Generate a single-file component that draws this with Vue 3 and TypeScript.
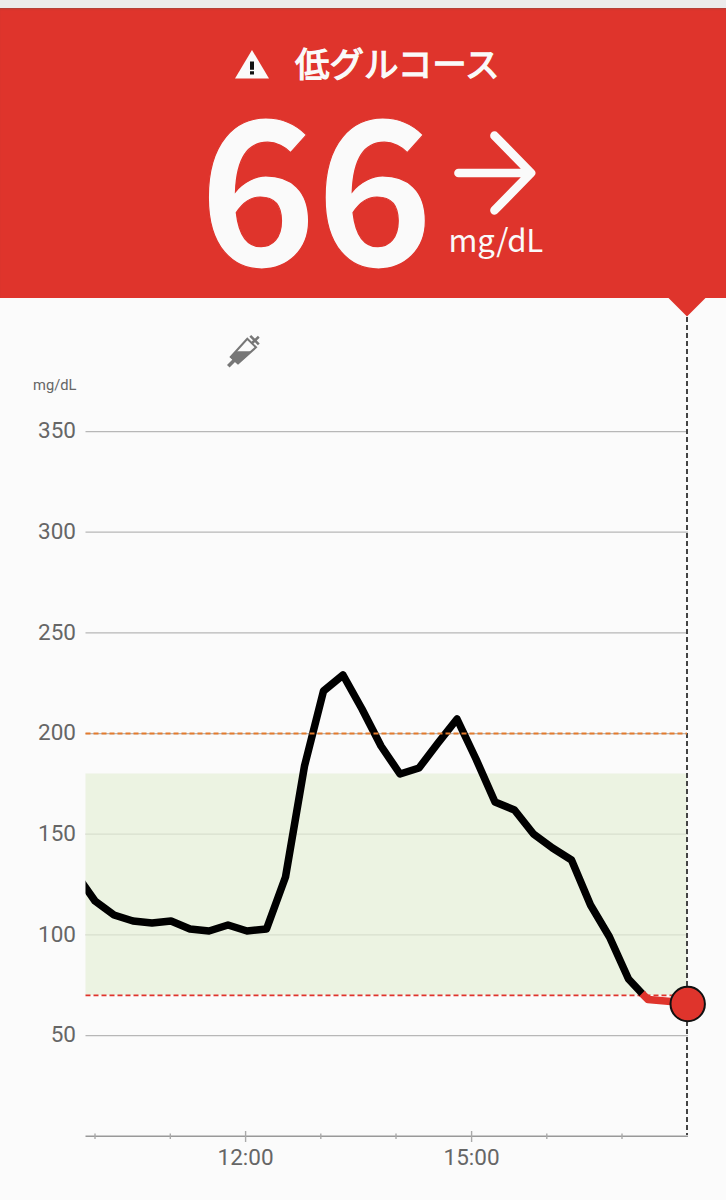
<script setup lang="ts">
interface GridLine { value: number; y: number }

const left = 85.5
const right = 688
const yFor = (value: number): number => 1136.2 - value * 2.0133

const grid: GridLine[] = [350, 300, 250, 200, 150, 100, 50].map((value) => ({ value, y: yFor(value) }))
const minorTicks: number[] = [95, 170.3, 320.8, 396, 546.8, 622]
const hours = [
  { x: 245.6, label: '12:00' },
  { x: 471.6, label: '15:00' },
]

const trace: [number, number][] = [
  [76, 874], [95, 901], [114, 915], [133, 921], [152, 923], [171, 921], [190, 929],
  [209, 931], [228, 925], [247, 931], [266.5, 929], [285.5, 877], [304.5, 766],
  [323.5, 691], [343, 675], [362, 709], [381, 746], [400, 774], [419, 768],
  [438, 743], [457, 719], [476, 759], [495, 802], [514.5, 810], [533.5, 834],
  [552.5, 848], [571.5, 860], [590.5, 905], [609.5, 937], [628.5, 979], [643, 994.5],
]
const lowTrace: [number, number][] = [[642, 993.5], [648, 999.5], [688, 1003]]
const toPoints = (list: [number, number][]): string => list.map((p) => p.join(',')).join(' ')
</script>

<template>
  <main class="screen">
    <div class="status-strip"></div>
    <header class="alert">
      <div class="alert-title">
        <svg class="warning" width="34" height="29" viewBox="0 0 34 29">
          <path d="M17 0 34 28.5H0Z" fill="#fafafa" />
          <path d="M15 11.5h4v8.2h-4zM15 21.2h4v3.2h-4z" fill="#111" />
        </svg>
        <h1>低グルコース</h1>
      </div>
      <div class="reading">
        <span class="value">66</span>
        <div class="trend">
          <svg width="82" height="84" viewBox="0 0 82 84">
            <path d="M4.5 42H77M40.5 4.7 77 42 40.5 79.3" />
          </svg>
          <span class="unit">mg/dL</span>
        </div>
      </div>
    </header>

    <svg class="chart" width="726" height="902" viewBox="0 298 726 902">
      <defs>
        <clipPath id="plot"><rect x="85.5" y="400" width="640" height="736" /></clipPath>
      </defs>
      <g class="grid">
        <line v-for="line in grid" :key="line.value" :x1="left" :x2="right" :y1="line.y" :y2="line.y" />
      </g>
      <rect class="target" :x="left" y="773.5" width="601.5" height="221.5" />
      <path class="axis" d="M85.5 1136.2H688" />
      <path v-for="x in minorTicks" :key="x" class="tick" :d="`M${x} 1133.5v5.5`" />
      <path v-for="hour in hours" :key="hour.label" class="tick" :d="`M${hour.x} 1131v11`" />

      <path class="now" d="M687 317V1135" />
      <path class="pointer" d="M668 297.5H706L687 316.5Z" />

      <path class="low-limit" d="M85.5 995.3H687" />
      <g clip-path="url(#plot)">
        <polyline class="trace" :points="toPoints(trace)" />
        <polyline class="trace low" :points="toPoints(lowTrace)" />
      </g>
      <path class="high-limit" d="M85.5 733.5H687" />
      <circle cx="687.7" cy="1004" r="17.2" fill="#df342c" stroke="#111" stroke-width="2" />

      <g class="syringe">
        <path class="outline" d="M247.3 338.8 256 347.3 238 363.3 230.8 357Z" />
        <path d="M235.5 351.3H252L238 364.3 229.8 357Z" />
        <path class="outline needle" d="M234.5 360 228.3 366.2" />
        <path class="outline plunger" d="M251.5 343.5 258.8 336.8M250.3 335.8 258.8 344.3" />
      </g>

      <text class="axis-unit" x="33" y="390">mg/dL</text>
      <g class="labels">
        <text v-for="line in grid" :key="line.value" x="76" :y="line.y + 6.8" text-anchor="end">{{ line.value }}</text>
        <text v-for="hour in hours" :key="hour.label" :x="hour.x" y="1165" text-anchor="middle">{{ hour.label }}</text>
      </g>
    </svg>
  </main>
</template>

<style>
body { margin: 0; background: #fbfbfb; }
</style>

<style scoped>
.screen { width: 726px; height: 1200px; overflow: hidden; background: #fbfbfb; font-family: Roboto, "Noto Sans CJK JP", sans-serif; }
.status-strip { height: 8px; background: #ebebeb; }
.alert { box-sizing: border-box; height: 290px; padding-top: 29px; background: #df342c; color: #fafafa; box-shadow: inset 0 2px 2px -1px #a7443c; font-family: "Noto Sans CJK JP", sans-serif; }
.alert-title { display: flex; align-items: center; height: 50px; padding-left: 235px; gap: 26px; }
.warning { margin-top: 5px; }
h1 { margin: -1px 0 0; font-size: 34.5px; line-height: 50px; font-weight: 400; -webkit-text-stroke: 1.3px #fafafa; white-space: nowrap; }
.reading { display: flex; height: 200px; padding-left: 198.5px; }
.value { width: 236.5px; margin-top: -8px; font-size: 201px; line-height: 200px; font-weight: 700; letter-spacing: -1.9px; -webkit-text-stroke: 1.2px #df342c; }
.trend { display: flex; flex-direction: column; align-items: flex-start; padding: 44px 0 0 19px; }
.trend svg { fill: none; stroke: #fafafa; stroke-width: 8.7; stroke-linecap: round; stroke-linejoin: round; }
.unit { margin: 4px 0 0 -5.5px; font-size: 31.2px; line-height: 40px; font-weight: 400; letter-spacing: -.2px; }
.chart { display: block; }
.grid line { stroke: #b7b7b7; stroke-width: 1.2; }
.target { fill: #e5efd7; fill-opacity: .7; }
.axis { stroke: #999; stroke-width: 1.4; }
.tick { stroke: #aaa; stroke-width: 1.4; }
.now { stroke: #444; stroke-width: 2; stroke-dasharray: 5 3; }
.pointer { fill: #df342c; }
.low-limit, .high-limit { stroke-width: 1.8; stroke-dasharray: 5 3; }
.low-limit { stroke: #df342c; }
.high-limit { stroke: #e37b2d; }
.trace { fill: none; stroke: #000; stroke-width: 7.5; stroke-linejoin: round; }
.low { stroke: #df342c; }
.syringe { fill: #777; }
.syringe .outline { fill: none; stroke: #777; stroke-width: 2; }
.syringe .needle { stroke-width: 3.6; }
.syringe .plunger { stroke-width: 2.6; }
.axis-unit { fill: #666; font-size: 14.7px; }
.labels text { fill: #666; font-size: 22.5px; }
</style>
